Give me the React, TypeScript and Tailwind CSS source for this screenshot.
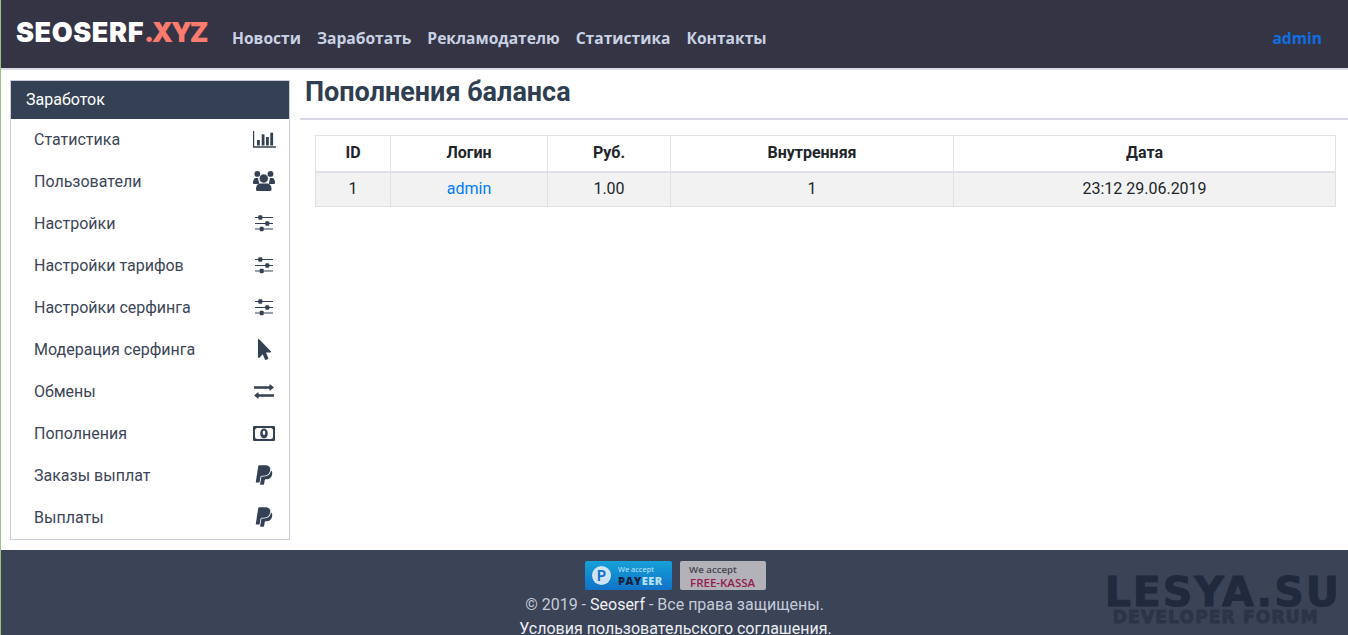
import { FaMousePointer, FaPaypal } from 'react-icons/fa';
import type { ReactNode } from 'react';

function ChartIcon() {
  return (
    <svg width="23" height="17" viewBox="0 0 23 17" fill="#344154">
      <path d="M0 0h1.200v15.300H23v1.500H0z" />
      <rect x="4" y="9" width="2.800" height="5.500" />
      <rect x="8.700" y="3.300" width="2.800" height="11.200" />
      <rect x="13" y="6" width="2.800" height="8.500" />
      <rect x="17.300" y="1.700" width="2.800" height="12.800" />
    </svg>
  );
}

function UsersIcon() {
  return (
    <svg width="22" height="20" viewBox="0 0 22 20" fill="#344154">
      <circle cx="4.300" cy="2.900" r="2.900" />
      <circle cx="17.500" cy="2.900" r="2.900" />
      <path d="M0 12c0-3 1-5 3-5h2l1 5v1H1a1 1 0 0 1-1-1zM22 12c0-3-1-5-3-5h-2l-1 5v1h5a1 1 0 0 0 1-1z" />
      <circle cx="10.800" cy="7.500" r="4.500" stroke="#fff" strokeWidth="0.600" />
      <path d="M3 18c0-3 1.500-5.500 4.500-5.500h6.500c3 0 4.500 2.500 4.500 5.500v0.500a1.500 1.500 0 0 1-1.500 1.500H4.500A1.500 1.500 0 0 1 3 18.500z" />
    </svg>
  );
}

function SlidersIcon() {
  return (
    <svg width="18" height="17" viewBox="0 0 18 17" fill="#344154">
      <rect x="0" y="2" width="18" height="1" />
      <rect x="0" y="8" width="18" height="1" />
      <rect x="0" y="13.500" width="18" height="1" />
      <rect x="3.300" y="0.300" width="4" height="4.400" rx="1" />
      <rect x="10.300" y="6.300" width="4" height="4.400" rx="1" />
      <rect x="4.700" y="11.800" width="4" height="4.400" rx="1" />
    </svg>
  );
}

function ExchangeIcon() {
  return (
    <svg width="20" height="15" viewBox="0 0 20 15" fill="#344154">
      <path d="M0 2.200h15.500V0L20 3.500 15.500 7V4.800H0z" />
      <path d="M20 10.200H4.500V8L0 11.500 4.500 15v-2.200H20z" />
    </svg>
  );
}

function MoneyIcon() {
  return (
    <svg width="22" height="15" viewBox="0 0 22 15">
      <rect width="22" height="15" rx="1" fill="#344154" />
      <rect x="2" y="2" width="18" height="11" rx="2.500" fill="#fff" />
      <ellipse cx="11" cy="7.500" rx="3.800" ry="5" fill="#344154" />
      <ellipse cx="11" cy="6.800" rx="1.300" ry="2.200" fill="#fff" />
    </svg>
  );
}

const menu: { label: string; icon: ReactNode }[] = [
  { label: 'Статистика', icon: <ChartIcon /> },
  { label: 'Пользователи', icon: <UsersIcon /> },
  { label: 'Настройки', icon: <SlidersIcon /> },
  { label: 'Настройки тарифов', icon: <SlidersIcon /> },
  { label: 'Настройки серфинга', icon: <SlidersIcon /> },
  { label: 'Модерация серфинга', icon: <FaMousePointer size={21} color="#344154" /> },
  { label: 'Обмены', icon: <ExchangeIcon /> },
  { label: 'Пополнения', icon: <MoneyIcon /> },
  { label: 'Заказы выплат', icon: <FaPaypal size={22} color="#344154" /> },
  { label: 'Выплаты', icon: <FaPaypal size={22} color="#344154" /> },
];

const nav = ['Новости', 'Заработать', 'Рекламодателю', 'Статистика', 'Контакты'];

export default function App() {
  return (
    <div className="relative flex h-screen flex-col overflow-hidden border-l border-[#9dc183] bg-white font-['Roboto',sans-serif] text-[#212529]">
      <header className="flex h-[70px] shrink-0 items-center border-b-2 border-[#dcdce4] bg-[#353445] pl-[15px] pr-[26px]">
        <a className="mb-[2px] w-[216px] font-['Inter',sans-serif] text-[27px] font-black tracking-[0.6px] text-white">
          SEOSERF<span className="tracking-[-2.200px] text-[#fd7b6e]">.XYZ</span>
        </a>
        <nav className="mt-[10px] flex gap-4 font-['Open_Sans',sans-serif] text-[15.6px] font-bold text-[#c9d2e3]">
          {nav.map((item) => (
            <a key={item}>{item}</a>
          ))}
        </nav>
        <a className="mt-[10px] ml-auto font-['Open_Sans',sans-serif] text-[15.6px] font-bold text-[#0f6fe0]">admin</a>
      </header>

      <div className="flex h-[480px] shrink-0">
        <aside className="mt-[10px] ml-[9px] h-[460px] w-[280px] shrink-0 border border-[#ccccdc]">
          <div className="flex h-[38px] items-center bg-[#344154] px-[15px] text-[16px] text-white">Заработок</div>
          <ul>
            {menu.map((m) => (
              <li key={m.label} className="flex h-[42px] items-center justify-between pl-[23px] pr-[13px] text-[16px] text-[#3b4557]">
                {m.label}
                <span className="mb-[2px] flex w-[24px] justify-center">{m.icon}</span>
              </li>
            ))}
          </ul>
        </aside>

        <main className="ml-[10px] min-w-0 flex-1">
          <h1 className="h-[50px] border-b-2 border-[#d6d6e7] pt-[5px] pl-[5px] text-[27px] leading-[34px] font-bold text-[#2f3e50]">
            Пополнения баланса
          </h1>
          <div className="pt-[15px] pr-[12px] pl-[15px]">
            <table className="w-[1021px] table-fixed border-collapse text-center text-[16px]">
              <thead>
                <tr className="h-[36px]">
                  <th className="w-[75px] border border-b-2 border-[#dee2e6] font-bold">ID</th>
                  <th className="w-[157px] border border-b-2 border-[#dee2e6] font-bold">Логин</th>
                  <th className="w-[123px] border border-b-2 border-[#dee2e6] font-bold">Руб.</th>
                  <th className="w-[283px] border border-b-2 border-[#dee2e6] font-bold">Внутренняя</th>
                  <th className="border border-b-2 border-[#dee2e6] font-bold">Дата</th>
                </tr>
              </thead>
              <tbody>
                <tr className="h-[35px] bg-[#f2f2f2]">
                  <td className="border border-[#dee2e6]">1</td>
                  <td className="border border-[#dee2e6] text-[#007bff]">admin</td>
                  <td className="border border-[#dee2e6]">1.00</td>
                  <td className="border border-[#dee2e6]">1</td>
                  <td className="border border-[#dee2e6]">23:12 29.06.2019</td>
                </tr>
              </tbody>
            </table>
          </div>
        </main>
      </div>

      <footer className="flex flex-1 flex-col items-center bg-[#3b4357] pt-[11px] text-[16px] text-[#c4cbd9]">
        <div className="ml-[2px] flex gap-2">
          <div className="flex h-[29px] w-[87px] items-center gap-[7px] rounded-[2px] bg-gradient-to-b from-[#18a0d8] to-[#1272c8] pl-[7px]">
            <span className="flex h-[19px] w-[19px] items-center justify-center rounded-full bg-[#cfe3f2] text-[14px] leading-none font-bold text-[#1272c8]">P</span>
            <div className="flex flex-col font-['Open_Sans',sans-serif]">
              <span className="text-[7.500px] leading-[10px] text-[#c9e6f5]">We accept</span>
              <span className="text-[11px] leading-[13px] font-extrabold tracking-[0.5px] text-[#15233a]">
                PAY<span className="text-[#b8e0f5]">EER</span>
              </span>
            </div>
          </div>
          <div className="flex h-[29px] w-[86px] flex-col justify-center rounded-[2px] bg-[#b2b2b8] pl-[9px] font-['Open_Sans',sans-serif]">
            <span className="text-[9.700px] leading-[13px] font-semibold text-[#454550]">We accept</span>
            <span className="pl-[1px] text-[11.500px] leading-[13px] font-semibold text-[#941c4e]">FREE-KASSA</span>
          </div>
        </div>
        <p className="mt-[3px] leading-[23px]">
          © 2019 - <span className="text-[#eef0f4]">Seoserf</span> - Все права защищены.
        </p>
        <p className="mt-[1px] ml-[2px] leading-[23px] text-[#eef0f4]">Условия пользовательского соглашения.</p>
      </footer>

      <div className="absolute right-[7px] bottom-[10px] flex flex-col items-center font-['DejaVu_Sans',sans-serif] font-bold [-webkit-text-stroke:1px_currentColor]">
        <span className="text-[41px] leading-[34px] tracking-[2px] text-[#202a3c]">LESYA.SU</span>
        <span className="mr-[14px] text-[17px] leading-[16px] tracking-[1.200px] text-[#2b3548]">DEVELOPER FORUM</span>
      </div>
    </div>
  );
}
